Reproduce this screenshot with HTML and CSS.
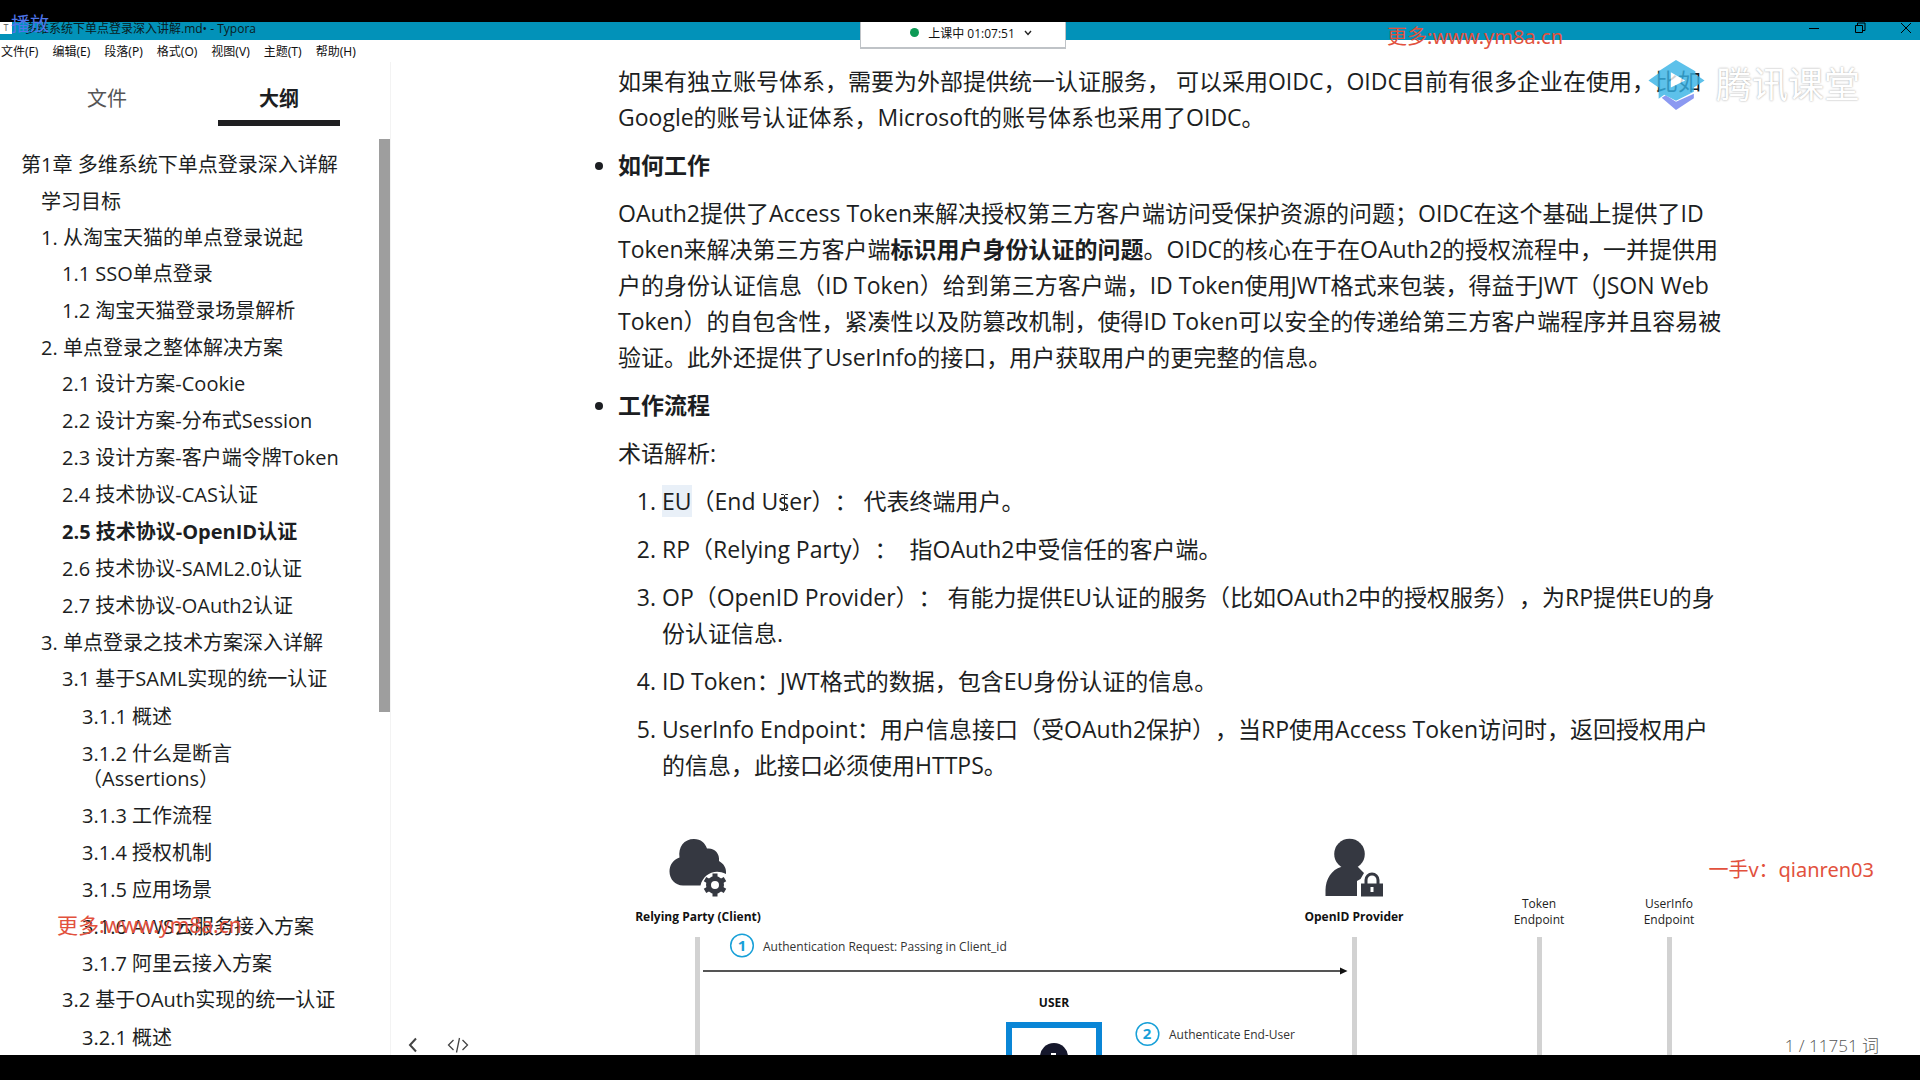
FILE: index.html
```html
<!DOCTYPE html>
<html lang="zh-CN">
<head>
<meta charset="utf-8">
<title>多维系统下单点登录深入讲解.md• - Typora</title>
<link rel="stylesheet" href="styles.css">
</head>
<body>
<div class="screen">
  <header class="titlebar">
    <span class="app-icon">T</span>
    <span class="title">多维系统下单点登录深入讲解.md• - Typora</span>
    <div class="window-buttons">
      <button class="win-btn" aria-label="最小化"><svg width="12" height="12" viewBox="0 0 12 12"><path d="M1 6.500h10"/></svg></button>
      <button class="win-btn" aria-label="还原"><svg width="12" height="12" viewBox="0 0 12 12"><path d="M1.500 3.500h7v7h-7zM3.500 3.500v-2.500h7.500v7.500h-2.500"/></svg></button>
      <button class="win-btn" aria-label="关闭"><svg width="12" height="12" viewBox="0 0 12 12"><path d="M1 1l10 10M11 1L1 11"/></svg></button>
    </div>
  </header>
  <nav class="menubar">
    <button>文件(F)</button><button>编辑(E)</button><button>段落(P)</button><button>格式(O)</button><button>视图(V)</button><button>主题(T)</button><button>帮助(H)</button>
  </nav>
  <div class="workspace">
    <aside class="sidebar">
      <div class="tabs">
        <button class="tab">文件</button>
        <button class="tab active">大纲</button>
      </div>
      <div class="outline-wrap">
        <ul class="outline">
          <li class="l1"><a href="#">第1章 多维系统下单点登录深入详解</a></li>
          <li class="l2"><a href="#">学习目标</a></li>
          <li class="l2"><a href="#">1. 从淘宝天猫的单点登录说起</a></li>
          <li class="l3"><a href="#">1.1 SSO单点登录</a></li>
          <li class="l3"><a href="#">1.2 淘宝天猫登录场景解析</a></li>
          <li class="l2"><a href="#">2. 单点登录之整体解决方案</a></li>
          <li class="l3"><a href="#">2.1 设计方案-Cookie</a></li>
          <li class="l3"><a href="#">2.2 设计方案-分布式Session</a></li>
          <li class="l3"><a href="#">2.3 设计方案-客户端令牌Token</a></li>
          <li class="l3"><a href="#">2.4 技术协议-CAS认证</a></li>
          <li class="l3 current"><a href="#">2.5 技术协议-OpenID认证</a></li>
          <li class="l3"><a href="#">2.6 技术协议-SAML2.0认证</a></li>
          <li class="l3"><a href="#">2.7 技术协议-OAuth2认证</a></li>
          <li class="l2"><a href="#">3. 单点登录之技术方案深入详解</a></li>
          <li class="l3"><a href="#">3.1 基于SAML实现的统一认证</a></li>
          <li class="l4"><a href="#">3.1.1 概述</a></li>
          <li class="l4"><a href="#">3.1.2 什么是断言<br>（Assertions）</a></li>
          <li class="l4"><a href="#">3.1.3 工作流程</a></li>
          <li class="l4"><a href="#">3.1.4 授权机制</a></li>
          <li class="l4"><a href="#">3.1.5 应用场景</a></li>
          <li class="l4"><a href="#">3.1.6 AWS云服务接入方案</a></li>
          <li class="l4"><a href="#">3.1.7 阿里云接入方案</a></li>
          <li class="l3"><a href="#">3.2 基于OAuth实现的统一认证</a></li>
          <li class="l4"><a href="#">3.2.1 概述</a></li>
        </ul>
        <div class="scrollbar"></div>
      </div>
    </aside>
    <main class="editor">
      <article class="write">
        <ul class="topics">
          <li class="plain"><p>如果有独立账号体系，需要为外部提供统一认证服务， 可以采用OIDC，OIDC目前有很多企业在使用，比如Google的账号认证体系，Microsoft的账号体系也采用了OIDC。</p></li>
          <li><p><strong>如何工作</strong></p>
            <p>OAuth2提供了Access Token来解决授权第三方客户端访问受保护资源的问题；OIDC在这个基础上提供了ID Token来解决第三方客户端<strong>标识用户身份认证的问题</strong>。OIDC的核心在于在OAuth2的授权流程中，一并提供用户的身份认证信息（ID Token）给到第三方客户端，ID Token使用JWT格式来包装，得益于JWT（JSON Web Token）的自包含性，紧凑性以及防篡改机制，使得ID Token可以安全的传递给第三方客户端程序并且容易被验证。此外还提供了UserInfo的接口，用户获取用户的更完整的信息。</p></li>
          <li><p><strong>工作流程</strong></p>
            <p>术语解析:</p>
            <ol class="terms">
              <li><mark>EU</mark>（End User）： 代表终端用户。</li>
              <li>RP（Relying Party）：&nbsp; 指OAuth2中受信任的客户端。</li>
              <li>OP（OpenID Provider）： 有能力提供EU认证的服务（比如OAuth2中的授权服务），为RP提供EU的身份认证信息.</li>
              <li>ID Token：JWT格式的数据，包含EU身份认证的信息。</li>
              <li>UserInfo Endpoint：用户信息接口（受OAuth2保护），当RP使用Access Token访问时，返回授权用户的信息，此接口必须使用HTTPS。</li>
            </ol>
            <svg class="diagram" viewBox="0 0 1115 260" role="img" aria-label="OpenID Connect 流程">
              <g fill="#d2d2d2"><path d="M77 109h5v151h-5zM734 109h5v151h-5zM919 109h5v151h-5zM1049 109h5v151h-5z"/></g>
              <g fill="#353841">
                <path d="M65 57.500C57 57.500 51.500 51 51.500 43.500C51.500 37 55 32 61.500 29.500C60 19 66 11 76 11C83 11 87 15 89 20.500C96 19.500 102 25 101 33C106 36 108.500 40 108 46C97 40 85 46 82.500 57.500z"/>
                <circle cx="731.500" cy="26" r="15.300"/>
                <path d="M707.500 68V62C707.500 51 714 41.500 723 39h17l6 6-3.500 6-3.500 2v15z"/>
                <path d="M743 55.500h22v13h-22z"/>
              </g>
              <circle cx="97" cy="57" r="6.500" fill="none" stroke="#353841" stroke-width="5"/>
              <path d="M97 45.500v4M97 64.500v4M87 51.200l3.500 2M103.500 60.800l3.500 2M87 62.800l3.500-2M103.500 53.200l3.500-2" stroke="#353841" stroke-width="5"/>
              <path d="M748 56v-4a6 6 0 0 1 12 0v4" fill="none" stroke="#353841" stroke-width="3"/>
              <path d="M752.500 59h3v5h-3z" fill="#fff"/>
              <path d="M85 143h640" stroke="#555" stroke-width="2"/>
              <path d="M722 139.500l7.500 3.500-7.500 3.500z" fill="#111"/>
              <g class="bold">
                <text x="80" y="93">Relying Party (Client)</text>
                <text x="736" y="93">OpenID Provider</text>
                <text x="436" y="179">USER</text>
              </g>
              <g class="endpoint">
                <text x="921" y="80">Token</text><text x="921" y="96">Endpoint</text>
                <text x="1051" y="80">UserInfo</text><text x="1051" y="96">Endpoint</text>
              </g>
              <g class="note">
                <text x="145" y="123">Authentication Request: Passing in Client_id</text>
                <text x="551" y="211">Authenticate End-User</text>
              </g>
              <g fill="none" stroke="#18a0d8" stroke-width="1.500"><circle cx="124" cy="117.500" r="11.300"/><circle cx="529.500" cy="206" r="11.300"/></g>
              <g class="step"><text x="124" y="123">1</text><text x="529" y="211">2</text></g>
              <path d="M391 260V197h90v63" fill="none" stroke="#0a86d6" stroke-width="6"/>
              <circle cx="436" cy="229" r="14" fill="#15172b"/><path d="M433 225h5v3h-5z" fill="#fff"/>
            </svg>
          </li>
        </ul>
      </article>
      <svg class="ibeam" width="9" height="17" viewBox="0 0 9 17"><path d="M1 .5h2.500l1 1 1-1H8M4.500 1.500v14M1 16.500h2.500l1-1 1 1H8" fill="none" stroke="#222"/></svg>
      <div class="editor-tools">
        <button aria-label="隐藏侧边栏"><svg width="10" height="16" viewBox="0 0 10 16"><path d="M8 1.500L2 8l6 6.500" stroke-width="2"/></svg></button>
        <button aria-label="源代码模式"><svg width="22" height="16" viewBox="0 0 22 16"><path d="M6.500 3L1.500 8l5 5M15.500 3l5 5-5 5M12.500 1L9.500 15.500" stroke-width="1.300"/></svg></button>
      </div>
      <div class="word-count">1 / 11751 词</div>
      <div class="watermark side">一手v：qianren03</div>
    </main>
  </div>
  <div class="brand">
    <svg width="57" height="50" viewBox="0 0 55 49"><path d="M13 37l4-2.500 10 6.500 17.500-8v4.500L27 49z" fill="#6f80ee"/><path d="M27 0l19 11v3l9 6-10.500 7v4L27 40l-11.500-6-5.500 4V27L0 20l10-7v-2z" fill="#35b2e6"/><path d="M22 12l14 8-14 7z" fill="#fff"/></svg>
    <span>腾讯课堂</span>
  </div>
  <button class="class-timer"><span class="dot"></span>上课中 01:07:51<svg width="8" height="6" viewBox="0 0 8 6"><path d="M1 1l3 3.500L7 1" fill="none" stroke="#222" stroke-width="1.400"/></svg></button>
  <div class="player-state">播放</div>
  <div class="watermark top">更多:www.ym8a.cn</div>
  <div class="watermark bottom">更多:www.ym8a.cn</div>
</div>
</body>
</html>
```
FILE: styles.css
```css
* { box-sizing: border-box; }
body { margin: 0; font-family: "Open Sans", "Noto Sans CJK SC", sans-serif; color: #1c1e22; background: #000; }
button { border: 0; padding: 0; background: none; font: inherit; color: inherit; }
ul, ol, p { margin: 0; padding: 0; }

.screen { position: relative; height: 100vh; padding: 22px 0 25px; display: flex; flex-direction: column; overflow: hidden; }

.titlebar { height: 18px; flex: none; background: #0292b9; display: flex; align-items: flex-start; font-size: 12px; color: #0a1a20; }
.app-icon { width: 12px; height: 12px; background: #fff; font-size: 9px; line-height: 12px; text-align: center; color: #555; }
.title { margin-left: 13px; line-height: 14px; }
.window-buttons { margin-left: auto; display: flex; gap: 34px; padding-right: 8px; }
.win-btn { height: 12px; display: flex; }
.win-btn svg { fill: none; stroke: #000; }

.menubar { flex: none; height: 22px; background: #fff; display: flex; align-items: center; gap: 14px; padding-left: 1px; font-family: "Noto Sans", "Noto Sans CJK SC", sans-serif; font-size: 12px; color: #111; }

.workspace { flex: 1; min-height: 0; display: flex; background: #fff; }
.sidebar { width: 391px; flex: none; display: flex; flex-direction: column; border-right: 1px solid #f3f3f3; font-size: 20px; }
.tabs { display: flex; gap: 50px; padding-left: 46px; height: 64px; flex: none; }
.tab { width: 122px; padding-top: 12px; border-bottom: 6px solid transparent; color: #555; }
.tab.active { font-weight: 700; color: #1c1e22; border-color: #1f1f21; }
.outline-wrap { flex: 1; min-height: 0; display: flex; margin-top: 13px; overflow: hidden; }
.outline { flex: 1; list-style: none; padding-top: 8px; }
.outline a { display: block; line-height: 26px; color: inherit; text-decoration: none; }
.l2 { padding: 5px 0; }
.l1, .l3 { padding: 5px 0 6px; }
.l4 { padding: 6px 0; }
.l1 { padding-left: 21px; }
.l2 { padding-left: 41px; }
.l3 { padding-left: 62px; }
.l4 { padding-left: 82px; }
.outline .l4 a { line-height: 25px; }
.current { font-weight: 700; }
.scrollbar { width: 11px; height: 573px; background: #9e9e9e; }

.editor { flex: 1; min-width: 0; position: relative; overflow: hidden; }
.write { max-width: 1155px; margin: 0 auto; padding-top: 1px; font-size: 23px; line-height: 36px; text-spacing-trim: space-all; }
.topics { padding-left: 40px; }
.topics .plain { list-style: none; }
.topics p { margin-bottom: 12px; }
.terms { padding: 0 8px 0 44px; }
.terms li { margin-bottom: 12px; }
mark { background: #e9f0f8; color: inherit; }
.diagram { display: block; width: 100%; height: auto; margin-top: 45px; font-size: 12px; }
.diagram .bold { font-weight: 700; text-anchor: middle; fill: #111; }
.diagram .endpoint { text-anchor: middle; fill: #222; }
.diagram .note { fill: #333; }
.diagram .step { text-anchor: middle; fill: #18a0d8; font-size: 15px; font-weight: 700; }

.ibeam { position: absolute; left: 389px; top: 432px; }
.editor-tools { position: absolute; left: 17px; bottom: 2px; display: flex; gap: 29px; }
.editor-tools button { display: flex; }
.editor-tools svg { fill: none; stroke: #444; }
.word-count { position: absolute; right: 41px; bottom: -1px; font-size: 17px; line-height: 20px; color: #555; font-weight: 300; }
.brand { position: absolute; right: 60px; top: 60px; display: flex; align-items: center; gap: 11px; font-size: 36px; line-height: 50px; color: #fff; text-shadow: 0 0 2px #999; }
.brand svg { opacity: .8; }

.class-timer { position: absolute; left: 50%; top: 22px; width: 206px; height: 27px; margin-left: -100px; padding: 0 0 4px 16px; background: #fff; border: 1px solid #bfc3c7; border-width: 0 1px 2px; display: flex; align-items: center; justify-content: center; gap: 9px; font-size: 12px; color: #111; }
.dot { width: 9px; height: 9px; border-radius: 50%; background: #0d9a56; }
.player-state { position: absolute; left: 11px; top: 11px; font-size: 19px; line-height: 26px; color: #4f76ea; }
.watermark { position: absolute; color: #e2513d; font-family: "Noto Sans", "Noto Sans CJK SC", sans-serif; font-size: 20px; line-height: 26px; white-space: nowrap; }
.watermark.top { right: 357px; top: 24px; }
.watermark.side { right: 46px; top: 795px; }
.watermark.bottom { left: 57px; top: 912px; font-size: 21px; }
```
